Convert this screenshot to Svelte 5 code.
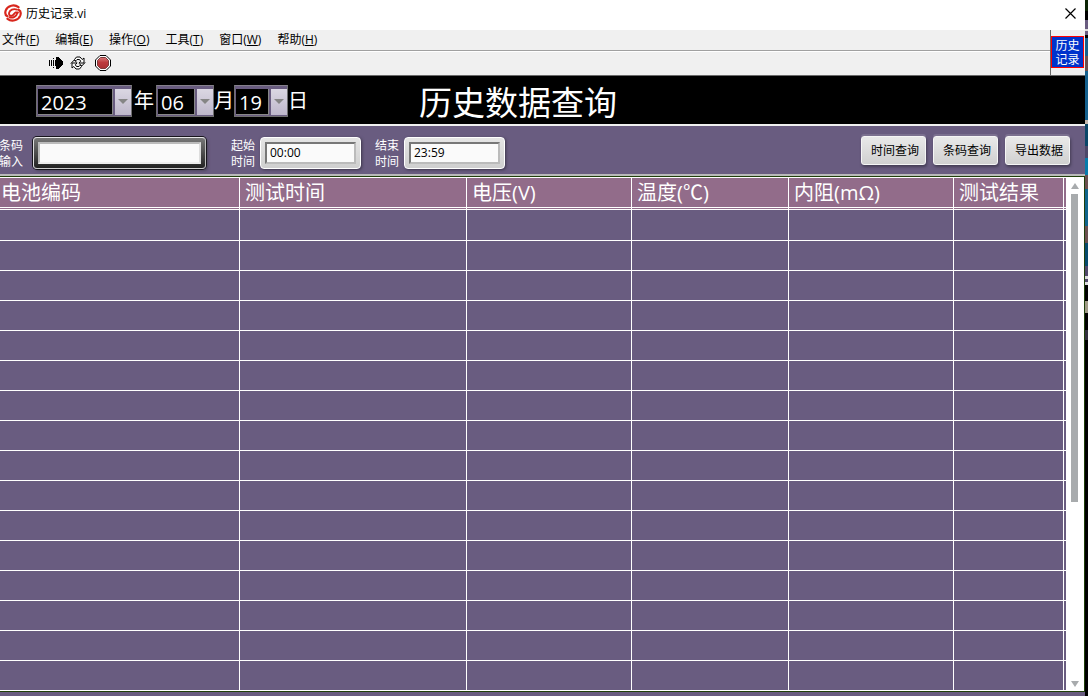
<script>
  const menus = [
    ["文件", "F"],
    ["编辑", "E"],
    ["操作", "O"],
    ["工具", "T"],
    ["窗口", "W"],
    ["帮助", "H"],
  ];

  const columns = ["电池编码", "测试时间", "电压(V)", "温度(℃)", "内阻(mΩ)", "测试结果"];
  const rows = Array.from({ length: 16 }, (_, i) => i);

  const years = ["2021", "2022", "2023", "2024"];
  const months = Array.from({ length: 12 }, (_, i) => String(i + 1).padStart(2, "0"));
  const days = Array.from({ length: 31 }, (_, i) => String(i + 1).padStart(2, "0"));

  let year = $state("2023");
  let month = $state("06");
  let day = $state("19");
  let barcode = $state("");
  let start = $state("00:00");
  let end = $state("23:59");
</script>

<div class="desktop">
  <main class="window">
    <header class="titlebar">
      <svg class="logo" viewBox="0 0 18 18" width="18" height="18" aria-hidden="true">
        <g fill="none" stroke="#d8261c" stroke-linecap="round">
          <path d="M14.5 3.2C10.5 0 3.5 1.3 1.7 6.5C.9 9 1.6 11.4 3.4 12.3" stroke-width="2.2" />
          <path d="M3.5 14.8C7.5 18 14.5 16.7 16.3 11.5C17.1 9 16.4 6.6 14.6 5.7" stroke-width="2.2" />
          <path d="M13 5.6C9.5 4.2 5.5 6 5 9.2C4.8 11 6 12 7.5 11.8C9.5 11.6 9.8 9.5 11.5 8.5H14" stroke-width="1.9" />
          <path d="M5.5 13.3C9 14.2 12.5 12.5 13.2 9.2" stroke-width="1.9" />
        </g>
      </svg>
      <span>历史记录.vi</span>
      <button class="close" aria-label="关闭">
        <svg viewBox="0 0 11 11" width="11" height="11"><path d="M.5.5l10 10M10.5.5l-10 10" stroke="#000" stroke-width="1.2" /></svg>
      </button>
    </header>

    <div class="chrome">
      <div class="bars">
        <nav>
          {#each menus as [name, key]}
            <button>{name}(<u>{key}</u>)</button>
          {/each}
        </nav>
        <div class="toolbar">
          <button aria-label="运行">
            <svg viewBox="0 0 16 14" width="16" height="14" shape-rendering="crispEdges">
              <path d="M1 4h1v6H1zM3 4h1v6H3zM5 2h1v1H5zM5 4h1v6H5zM5 11h1v1H5z" />
              <path d="M7 4h1V1h2l5 5v2l-5 5H8v-3H7z" />
            </svg>
          </button>
          <button aria-label="连续运行">
            <svg viewBox="0 0 16 14" width="16" height="14">
              <g fill="#fff" stroke="#000">
                <path d="M4.5 3.5L6.500 1h3.500l2.200 2.500L14 2v5H9l1.700-1.800L9.500 3.500H7L5.500 5z" />
                <path d="M11.500 10.500L9.500 13H6l-2.200-2.500L2 12V7h5L5.300 8.800l1.200 1.700H9L10.500 9z" />
                <path d="M.8 7.500L4.300 4l2.500 2.500" fill="none" />
                <path d="M15.200 6.500L11.700 10 9.200 7.500" fill="none" />
              </g>
            </svg>
          </button>
          <button class="abort" aria-label="中止">
            <svg viewBox="0 0 16 16" width="16" height="16">
              <defs>
                <linearGradient id="stop" x1="0" y1="0" x2="0" y2="1">
                  <stop offset="0" stop-color="#d97878" />
                  <stop offset=".45" stop-color="#bd3a3d" />
                  <stop offset="1" stop-color="#ab3034" />
                </linearGradient>
              </defs>
              <path d="M5 .5h6L15.5 5v6L11 15.5H5L.5 11V5z" fill="#fff" stroke="#000" />
              <path d="M5.5 2.5h5l3 3v5l-3 3h-5l-3-3v-5z" fill="url(#stop)" stroke="#7d3a3c" />
            </svg>
          </button>
        </div>
      </div>
      <div class="corner">
        <div class="vi-icon"><span>历史</span><span>记录</span></div>
      </div>
    </div>

    <section class="banner">
      <div class="date">
        <span class="picker year">
          <select bind:value={year} aria-label="年">
            {#each years as y}<option>{y}</option>{/each}
          </select>
        </span>
        <span class="unit">年</span>
        <span class="picker month">
          <select bind:value={month} aria-label="月">
            {#each months as m}<option>{m}</option>{/each}
          </select>
        </span>
        <span class="unit narrow">月</span>
        <span class="picker day">
          <select bind:value={day} aria-label="日">
            {#each days as d}<option>{d}</option>{/each}
          </select>
        </span>
        <span class="unit narrow">日</span>
      </div>
      <h1>历史数据查询</h1>
    </section>

    <form class="filters" onsubmit={(e) => e.preventDefault()}>
      <label for="barcode" class="first">条码<br />输入</label>
      <div class="frame dark"><input id="barcode" bind:value={barcode} /></div>
      <label for="start">起始<br />时间</label>
      <div class="frame"><input id="start" bind:value={start} /></div>
      <label for="end" class="end">结束<br />时间</label>
      <div class="frame"><input id="end" bind:value={end} /></div>
      <div class="actions">
        <button>时间查询</button>
        <button>条码查询</button>
        <button>导出数据</button>
      </div>
    </form>

    <section class="results">
      <table>
        <colgroup>
          <col class="code" />
          <col class="time" />
          <col class="volt" />
          <col class="temp" />
          <col class="ohm" />
          <col />
        </colgroup>
        <thead>
          <tr>
            {#each columns as column}<th>{column}</th>{/each}
          </tr>
        </thead>
        <tbody>
          {#each rows as row (row)}
            <tr>
              {#each columns as column}<td></td>{/each}
            </tr>
          {/each}
        </tbody>
      </table>
      <div class="scroll">
        <button class="up" aria-label="向上滚动"></button>
        <div class="track"><div class="thumb"></div></div>
        <button class="down" aria-label="向下滚动"></button>
      </div>
    </section>
  </main>
  <div class="behind"></div>
</div>

<style>
  :global(body) {
    background: #695c80;
  }

  .desktop {
    display: flex;
    min-height: 100vh;
    overflow: hidden;
    font-family: "Open Sans", "Noto Sans CJK SC", sans-serif;
    font-size: 12px;
    color: #000;
  }

  .window {
    flex: 1;
    min-width: 0;
    background: #695c80;
  }

  .behind {
    width: 3px;
    background: linear-gradient(
      #0c2505 0 11px, #000 11px 20px, #695c80 20px 29px, #ddd 29px 31px, #695c80 31px 35px,
      #000 35px 38px, #15608d 38px 56px, #6c5050 56px 71px, #15608d 71px 120px, #c5b7ad 120px 124px,
      #0b4668 124px 146px, #4c4668 146px 158px, #087bab 158px 175px, #6c5050 175px 189px,
      #10648c 189px 226px, #6c5050 226px 243px, #074a6d 243px 266px, #51486b 266px 276px,
      #ddd 276px 279px, #51486b 279px 282px, #ddd 282px 285px, #000 285px 301px,
      #a09b86 301px 313px, #000 313px 330px, #33303f 330px 340px, #000 340px
    );
  }

  button {
    padding: 0;
    border: 0;
    background: none;
    font: inherit;
    color: inherit;
  }

  svg {
    display: block;
  }

  /* title, menu and toolbar */
  .titlebar {
    display: flex;
    align-items: center;
    height: 30px;
    padding: 0 9px 4px 4px;
    box-sizing: border-box;
    background: #fff;
  }

  .titlebar span {
    margin-left: 4px;
  }

  .close {
    margin-left: auto;
  }

  .chrome {
    display: flex;
    height: 45px;
    background: #f0f0f0;
    border-bottom: 1px solid #696969;
  }

  .bars {
    flex: 1;
  }

  nav {
    display: flex;
    gap: 16px;
    height: 20px;
    padding-left: 2px;
    border-bottom: 1px solid #a0a0a0;
    line-height: 18px;
  }

  nav u {
    text-underline-offset: 1px;
  }

  .toolbar {
    display: flex;
    align-items: center;
    gap: 6px;
    height: 23px;
    padding-left: 48px;
    border-top: 1px solid #fff;
    box-sizing: border-box;
  }

  .toolbar .abort {
    margin-left: 3px;
  }

  .corner {
    width: 35px;
    padding: 6px 1px 0 0;
    border-left: 1px solid #696969;
    box-sizing: border-box;
  }

  .vi-icon {
    display: flex;
    flex-direction: column;
    align-items: center;
    justify-content: center;
    height: 32px;
    border: 1px solid #f00;
    box-sizing: border-box;
    background: #03c;
    color: #fff;
    font-family: "Noto Sans CJK SC", sans-serif;
    line-height: 14px;
  }

  /* date banner */
  .banner {
    display: flex;
    align-items: center;
    height: 48px;
    background: #000;
    border-bottom: 2px solid #f0f0f0;
    color: #fff;
  }

  .date {
    display: flex;
    align-items: center;
    width: 383px;
    padding: 2px 0 0 36px;
    font-size: 20px;
  }

  .picker {
    position: relative;
    height: 32px;
    border: 1px solid #707070;
    border-top-color: #85818c;
    box-sizing: border-box;
    background: #000;
  }

  .picker::after {
    content: "";
    position: absolute;
    top: 13px;
    right: 3px;
    border: 5px solid transparent;
    border-top-color: #858585;
    pointer-events: none;
  }

  .year {
    width: 96px;
  }

  .month {
    width: 58px;
  }

  .day {
    width: 54px;
  }

  select {
    width: 100%;
    height: 30px;
    padding: 0 0 0 3px;
    border: 1px solid #695c80;
    border-top-width: 3px;
    border-right-width: 0;
    border-radius: 0;
    appearance: none;
    background:
      linear-gradient(#dedbe5, #bdb6ca) right / 16px 100% no-repeat border-box,
      linear-gradient(#695c80, #695c80) right 16px top / 2px 100% no-repeat border-box,
      linear-gradient(#888, #888) right 18px top / 1px 100% no-repeat,
      linear-gradient(#888, #888) left bottom / 100% 1px no-repeat,
      #000;
    color: #fff;
    font: inherit;
  }

  option {
    background: #000;
  }

  .unit {
    width: 24px;
    text-align: center;
    line-height: 28px;
  }

  .narrow {
    width: 20px;
  }

  h1 {
    margin: 0;
    padding-top: 6px;
    font-size: 33px;
    font-weight: 400;
    line-height: 42px;
  }

  /* search row */
  .filters {
    display: flex;
    align-items: center;
    height: 48px;
    padding: 5px 15px 0 0;
    box-sizing: border-box;
  }

  .filters label {
    width: 24px;
    margin: 0 5px 0 25px;
    padding-top: 2px;
    color: #fff;
    line-height: 16px;
  }

  .filters .first {
    margin: 0 10px 0 -1px;
  }

  .filters .end {
    margin-left: 14px;
  }

  .frame {
    width: 101px;
    height: 32px;
    padding: 4px;
    border: 1px solid #fff;
    border-radius: 4px;
    box-sizing: border-box;
    background: linear-gradient(#e4e4e4, #cfcfcf);
    box-shadow: 1px 1px 3px #3d374b;
  }

  .frame input {
    width: 100%;
    height: 22px;
    padding: 0 3px;
    border: 2px solid #bbb;
    border-top-color: #777;
    border-left-color: #777;
    box-sizing: border-box;
    background: #fafafa;
    font: inherit;
    color: #000;
    display: block;
  }

  .dark {
    width: 173px;
    border-color: #e8e8e8 #bbb #ccc #ddd;
    background: linear-gradient(#777, #222);
    box-shadow: 0 0 0 1px #17151c, 2px 2px 3px #4d465c;
  }

  .dark input {
    border-color: #bbb #ddd #eee #bbb;
  }

  .actions {
    display: flex;
    gap: 7px;
    margin: 0 0 5px auto;
  }

  .actions button {
    width: 65px;
    height: 29px;
    border: 1px solid #f5f5f5;
    border-radius: 3px;
    background: linear-gradient(#e9e9e9, #d0d0d0);
    box-shadow: 0 -2px 0 #7b708f, 1px 2px 3px #443d54;
    white-space: nowrap;
    padding-left: 3px;
  }

  /* results table */
  .results {
    display: flex;
    border: 1px solid #1f3f0a;
    border-left: 0;
    box-shadow: 0 -2px 0 #b9b9b9;
    margin-top: 2px;
  }

  table {
    flex: 1;
    table-layout: fixed;
    border-spacing: 0;
  }

  .code {
    width: 22.51%;
  }

  .time {
    width: 21.3%;
  }

  .volt,
  .ohm {
    width: 15.48%;
  }

  .temp {
    width: 14.73%;
  }

  th,
  td {
    padding: 0;
    border-right: 1px solid #fff;
    border-bottom: 1px solid #fff;
    box-sizing: border-box;
  }

  th {
    height: 33px;
    padding-left: 5px;
    border-top: 1px solid #fff;
    border-bottom: 3px double #fff;
    background-color: #926c8a;
    color: #fff;
    font-size: 20px;
    font-weight: 400;
    line-height: 29px;
    text-align: left;
    white-space: nowrap;
  }

  th:first-child {
    padding-left: 1px;
  }

  td {
    height: 30px;
  }

  tbody tr:first-child td {
    height: 31px;
  }

  /* second rule close to the scrollbar */
  th:last-child,
  td:last-child {
    border-right: 0;
    background-image: linear-gradient(to left, transparent 2px, #fff 2px 3px, transparent 3px);
  }

  .scroll {
    display: flex;
    flex-direction: column;
    align-items: center;
    width: 18px;
    padding: 6px 1px 4px 0;
    box-sizing: border-box;
    background: #fff;
  }

  .up,
  .down {
    width: 0;
    height: 0;
    border: 4px solid transparent;
  }

  .up {
    border-top: 0;
    border-bottom: 6px solid #a8abad;
  }

  .down {
    border-bottom: 0;
    border-top: 6px solid #a8abad;
  }

  .track {
    flex: 1;
    margin: 5px 0;
  }

  .thumb {
    width: 7px;
    height: 64%;
    background: #a8abad;
  }
</style>
